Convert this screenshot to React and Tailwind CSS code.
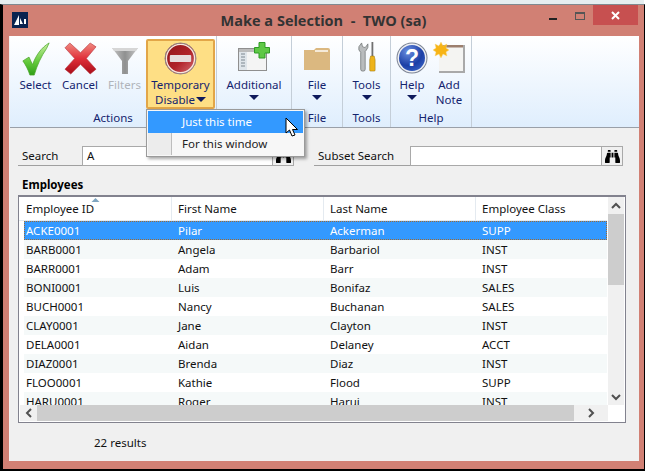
import React from "react";
import { FaBinoculars } from "react-icons/fa";

const rows = [
  ["ACKE0001", "Pilar", "Ackerman", "SUPP"],
  ["BARB0001", "Angela", "Barbariol", "INST"],
  ["BARR0001", "Adam", "Barr", "INST"],
  ["BONI0001", "Luis", "Bonifaz", "SALES"],
  ["BUCH0001", "Nancy", "Buchanan", "SALES"],
  ["CLAY0001", "Jane", "Clayton", "INST"],
  ["DELA0001", "Aidan", "Delaney", "ACCT"],
  ["DIAZ0001", "Brenda", "Diaz", "INST"],
  ["FLOO0001", "Kathie", "Flood", "SUPP"],
  ["HARU0001", "Roger", "Harui", "INST"],
];

const Caret = () => (
  <span className="inline-block w-0 h-0 border-x-[5px] border-x-transparent border-t-[5px] border-t-[#0f1a5c]" />
);

const Logo = () => (
  <svg width="16" height="16" viewBox="0 0 16 16">
    <rect width="16" height="16" fill="#0a2350" />
    <path d="M2 13 L7 3 L7 13 Z M8 6 L11 12 L8 12 Z M12 7 L14 7 L14 12 L12 12 Z" fill="#fff" />
  </svg>
);

const Check = () => (
  <svg width="28" height="34" viewBox="0 0 32 36" preserveAspectRatio="none">
    <defs>
      <linearGradient id="ck" x1="0" y1="0" x2="0" y2="1">
        <stop offset="0" stopColor="#c8f0a0" />
        <stop offset="0.6" stopColor="#62c93a" />
        <stop offset="1" stopColor="#2f9e18" />
      </linearGradient>
    </defs>
    <path d="M1 20 L8 16 L12 24 C16 14 22 6 31 1 L28 7 C22 15 17 25 14 35 L9 35 C7 29 4 24 1 20 Z" fill="url(#ck)" stroke="#4aa52a" strokeWidth="0.8" />
  </svg>
);

const Cross = () => (
  <svg width="33" height="33" viewBox="0 0 34 34">
    <defs>
      <linearGradient id="xr" x1="0" y1="0" x2="0" y2="1">
        <stop offset="0" stopColor="#f08a80" />
        <stop offset="0.5" stopColor="#e0303a" />
        <stop offset="1" stopColor="#a80c18" />
      </linearGradient>
    </defs>
    <path d="M6 1 L17 11 L27 1 L33 5 L23 17 L33 28 L27 33 L17 23 L7 33 L1 28 L11 17 L1 6 Z" fill="url(#xr)" stroke="#b3323a" strokeWidth="0.6" />
  </svg>
);

const Funnel = () => (
  <svg width="26" height="28" viewBox="0 0 26 28">
    <defs>
      <linearGradient id="fn" x1="0" y1="0" x2="1" y2="0">
        <stop offset="0" stopColor="#c4c4c4" />
        <stop offset="0.5" stopColor="#8f9090" />
        <stop offset="1" stopColor="#c8c8c8" />
      </linearGradient>
    </defs>
    <path d="M0 1 H26 L22 6 L16 14 V27 H10 V14 L4 6 Z" fill="url(#fn)" />
    <path d="M0 1 H26 L24 4 H2 Z" fill="#d6d6d6" />
  </svg>
);

const NoEntry = () => (
  <svg width="33" height="33" viewBox="0 0 34 34">
    <defs>
      <linearGradient id="ne" x1="0" y1="0" x2="1" y2="1">
        <stop offset="0" stopColor="#8e1418" />
        <stop offset="0.55" stopColor="#b02228" />
        <stop offset="1" stopColor="#d8757a" />
      </linearGradient>
    </defs>
    <circle cx="17" cy="17" r="16" fill="url(#ne)" stroke="#8a8a8a" strokeWidth="1" />
    <circle cx="17" cy="17" r="14.5" fill="none" stroke="#f4e8e0" strokeWidth="1.4" />
    <rect x="6" y="13.5" width="22" height="7" rx="1" fill="#e6dcdc" />
  </svg>
);

const Additional = () => (
  <svg width="32" height="29" viewBox="0 0 32 29">
    <rect x="0.5" y="6.5" width="28" height="22" fill="#f4f4f4" stroke="#8f8f8f" />
    <rect x="1" y="7" width="27" height="3" fill="#bcbcbc" />
    <rect x="1" y="10" width="8" height="18" fill="#dfe5ea" />
    <path d="M3 12 h4 M3 15 h4 M3 18 h4 M3 21 h4 M3 24 h4" stroke="#7d8790" strokeWidth="1" />
    <path d="M21 0.5 H27 V5.5 H31.5 V11 H27 V16 H21 V11 H16.5 V5.5 H21 Z" fill="#5fc846" stroke="#2f9a25" />
  </svg>
);

const Folder = () => (
  <svg width="26" height="23" viewBox="0 0 26 23">
    <path d="M0 3 H10 L12 1 H24 Q26 1 26 3 V23 H0 Z" fill="#dbb880" />
    <rect x="11" y="3" width="13" height="2" fill="#f5ead8" />
  </svg>
);

const ToolsIcon = () => (
  <svg width="18" height="30" viewBox="0 0 20 32" preserveAspectRatio="none">
    <path d="M1 5 L4 1 L5 5 L8 6 L11 2 Q12 6 9 9 L8 10 V29 Q8 31 6 31 H5 Q3 31 3 29 V11 Q0 9 1 5 Z" fill="#b9bcbd" stroke="#6f7273" strokeWidth="0.8" />
    <rect x="15" y="0" width="2" height="15" fill="#707070" />
    <path d="M14 15 H18 L19 19 V30 Q19 31 18 31 H14 Q13 31 13 30 V19 Z" fill="#eeb31a" stroke="#9e7a14" strokeWidth="0.6" />
  </svg>
);

const HelpIcon = () => (
  <svg width="32" height="32" viewBox="0 0 32 32">
    <defs>
      <radialGradient id="hp" cx="0.35" cy="0.25" r="0.9">
        <stop offset="0" stopColor="#6b8fe0" />
        <stop offset="0.6" stopColor="#1c3fa6" />
        <stop offset="1" stopColor="#3a66c8" />
      </radialGradient>
    </defs>
    <circle cx="16" cy="16" r="15.5" fill="#7c8494" />
    <circle cx="16" cy="16" r="14.5" fill="#eef0f4" />
    <circle cx="16" cy="16" r="13" fill="url(#hp)" />
    <text x="16" y="24" textAnchor="middle" fontFamily="'Liberation Sans', sans-serif" fontWeight="700" fontSize="23" fill="#fff">?</text>
  </svg>
);

const NoteIcon = () => (
  <svg width="33" height="32" viewBox="0 0 33 32">
    <path d="M6 3 H32 V31 H6 Z" fill="#f4f4f2" />
    <rect x="6" y="3" width="26" height="2.5" fill="#9c7f6e" />
    <path d="M32 3 V31 H6 V29 H30 V3 Z" fill="#a9a9a9" />
    <path d="M8 0 L10 4 L14 2 L13 6 L16 8 L13 10 L14 14 L10 12 L8 16 L6 12 L2 14 L3 10 L0 8 L3 6 L2 2 L6 4 Z" fill="#f7b416" stroke="#f9d67a" strokeWidth="0.4" />
  </svg>
);

const Cursor = () => (
  <svg width="14" height="21" viewBox="0 0 14 21">
    <path d="M1 1 V16 L4.5 13 L7 19 L10 18 L7.5 12.5 H12.5 Z" fill="#fff" stroke="#000" strokeWidth="1" />
  </svg>
);

function Chevron({ d }) {
  return (
    <svg width="10" height="8" viewBox="0 0 10 8">
      <path d={d} fill="none" stroke="#505050" strokeWidth="2" />
    </svg>
  );
}

function RibbonButton({ w, icon, l1, l2, caret, muted, iconClass }) {
  return (
    <div className={`${w} flex flex-col items-center shrink-0`}>
      <div className={`h-[36px] flex items-start justify-center ${iconClass || "pt-[3px]"}`}>{icon}</div>
      <div className={`mt-[2px] leading-[15px] text-center ${muted ? "text-[#b0b4ba]" : ""}`}>{l1}</div>
      {l2 && <div className="leading-[15px] text-center">{l2}</div>}
      {caret && <div className="h-[11px] flex items-center"><Caret /></div>}
    </div>
  );
}

function Group({ w, label, children }) {
  return (
    <div className={`${w} h-full flex flex-col border-r border-r-[#c4ced8] shrink-0`}>
      <div className="h-[74px] flex justify-center pt-[3px]">{children}</div>
      <div className="h-[17px] leading-[15px] text-center">{label}</div>
    </div>
  );
}

function SearchField({ label, lw, iw }) {
  return (
    <div className="flex items-stretch h-[20px]">
      <div className={`${lw} border-b border-b-[#a0a0a0] pl-1 leading-[20px] text-[#111]`}>{label}</div>
      <div className={`${iw} bg-white border border-[#a9a9a9] pl-1 leading-[17px] text-[#111]`}>{label === "Search" ? "A" : ""}</div>
      <div className="w-[21px] border border-l-0 border-[#a9a9a9] bg-[#f0f0f0] flex items-center justify-center">
        <FaBinoculars size={15} color="#000" />
      </div>
    </div>
  );
}

export default function App() {
  return (
    <div className="w-[647px] h-[473px] bg-white overflow-hidden relative text-[11.5px] text-[#111]" style={{ fontFamily: "'Noto Sans', sans-serif" }}>
      <div className="h-[4px] w-[644px] bg-[#e6eef0]" />
      <div className="w-[645px] h-[467px] bg-[#d18074] border-t border-t-[#808a90] border-l-[3px] border-l-black border-r border-r-black border-b-[2px] border-b-black flex flex-col">
        <div className="h-[31px] shrink-0 flex items-start relative px-[9px]">
          <div className="mt-[7px]"><Logo /></div>
          <div className="absolute left-0 right-0 top-[5px] text-center text-[14.5px] leading-[22px] font-bold text-[#333] whitespace-pre" style={{ fontFamily: "'Open Sans', sans-serif" }}>Make a Selection  -  TWO (sa)</div>
          <div className="absolute right-[6px] top-0 flex items-start">
            <div className="w-[8px] h-[2px] bg-[#222] mt-[13px] mr-[18px]" />
            <div className="w-[10px] h-[8px] border border-[#555] border-t-2 mt-[7px] mr-[8px]" />
            <div className="w-[45px] h-[20px] bg-[#c75050] text-white flex items-center justify-center">
              <svg width="9" height="9" viewBox="0 0 9 9"><path d="M1 1 L8 8 M8 1 L1 8" stroke="#fff" strokeWidth="2" /></svg>
            </div>
          </div>
        </div>

        <div className="ml-[6px] mr-[5px] h-[425px] shrink-0 bg-[#f0f0f0] border-l border-l-[#f4f4f4] flex flex-col">
          <div className="h-[92px] shrink-0 border-b border-b-[#9aa0a8] bg-gradient-to-b from-white to-[#dfeefd] flex text-[#14246e] pb-0">
            <Group w="w-[207px]" label="Actions">
              <div className="flex w-full pl-[4px] justify-start">
                <RibbonButton w="w-[43px]" icon={<Check />} l1="Select" />
                <RibbonButton w="w-[46px]" icon={<Cross />} l1="Cancel" />
                <RibbonButton w="w-[43px]" icon={<Funnel />} l1="Filters" muted iconClass="pt-[8px]" />
                <div className="w-[69px] h-[70px] bg-[#fedf85] border-2 border-[#e2a648] rounded-[2px] flex flex-col items-center shrink-0">
                  <div className="mt-[1px] h-[33px]"><NoEntry /></div>
                  <div className="mt-[2px] leading-[15px]">Temporary</div>
                  <div className="leading-[15px] flex items-center gap-[1px]">Disable<Caret /></div>
                </div>
              </div>
            </Group>
            <Group w="w-[75px]" label="">
              <RibbonButton w="w-[70px]" icon={<Additional />} l1="Additional" caret />
            </Group>
            <Group w="w-[51px]" label="File">
              <RibbonButton w="w-[40px]" icon={<Folder />} l1="File" caret iconClass="pt-[8px]" />
            </Group>
            <Group w="w-[48px]" label="Tools">
              <RibbonButton w="w-[40px]" icon={<ToolsIcon />} l1="Tools" caret />
            </Group>
            <Group w="w-[81px]" label="Help">
              <div className="flex w-full pl-[1px]">
                <RibbonButton w="w-[40px]" icon={<HelpIcon />} l1="Help" caret />
                <RibbonButton w="w-[34px]" icon={<NoteIcon />} l1="Add" l2="Note" />
              </div>
            </Group>
          </div>

          <div className="flex mt-[18px] ml-[8px] shrink-0">
            <SearchField label="Search" lw="w-[64px]" iw="w-[191px]" />
            <div className="ml-[20px]">
              <SearchField label="Subset Search" lw="w-[96px]" iw="w-[192px]" />
            </div>
          </div>

          <div className="ml-[12px] mt-[10px] h-[19px] font-bold leading-[18px] text-black">Employees</div>

          <div className="ml-[8px] w-[608px] h-[228px] shrink-0 border border-[#82828e] border-t-2 bg-white flex flex-col">
            <div className="flex h-[208px]">
              <div className="w-[589px] pr-[1px] flex flex-col overflow-hidden">
                <div className="h-[24px] shrink-0 flex pl-[5px] border-b border-b-[#e4eaf0] relative leading-[24px] text-[#111]">
                  {["Employee ID", "First Name", "Last Name", "Employee Class"].map((h, i) => (
                    <div key={h} className={`shrink-0 ${i === 0 ? "w-[148px] pl-[2px]" : "w-[152px] pl-[6px]"} ${i < 3 ? "border-r border-r-[#e4eaf0]" : ""}`}>{h}</div>
                  ))}
                  <svg className="absolute left-[72px] top-[1px]" width="9" height="4" viewBox="0 0 9 4"><path d="M0.5 4 L4.5 0 L8.5 4 Z" fill="#7fa5c0" /></svg>
                </div>
                <div className="flex-1 overflow-hidden pl-[5px]">
                  {rows.map((r, i) => (
                    <div key={r[0]} className={`h-[19px] flex leading-[19px] ${i === 0 ? "bg-[#3399ff] text-white outline-1 -outline-offset-1 outline-dotted outline-[#a06a30]" : i % 2 === 1 ? "bg-[#f5f9f9]" : "bg-white"}`}>
                      {r.map((c) => <div key={c} className="w-[152px] pl-[2px] shrink-0">{c}</div>)}
                    </div>
                  ))}
                </div>
              </div>
              <div className="w-[16px] bg-[#f0f0f0] flex flex-col items-center">
                <div className="h-[17px] w-full flex items-center justify-center"><Chevron d="M1 6 L5 2 L9 6" /></div>
                <div className="h-[71px] w-full bg-[#cdcdcd]" />
                <div className="flex-1" />
                <div className="h-[17px] w-full flex items-center justify-center"><Chevron d="M1 2 L5 6 L9 2" /></div>
              </div>
            </div>
            <div className="flex h-[16px] bg-[#f0f0f0] w-[588px] ml-[1px]">
              <div className="w-[17px] flex items-center justify-center"><svg width="8" height="10" viewBox="0 0 8 10"><path d="M6 1 L2 5 L6 9" fill="none" stroke="#505050" strokeWidth="2" /></svg></div>
              <div className="w-[537px] bg-[#cdcdcd]" />
              <div className="flex-1 flex items-center justify-center"><svg width="8" height="10" viewBox="0 0 8 10"><path d="M2 1 L6 5 L2 9" fill="none" stroke="#505050" strokeWidth="2" /></svg></div>
            </div>
          </div>

          <div className="ml-[84px] mt-[11px] leading-[18px] text-[#111]">22 results</div>
        </div>
      </div>

      <div className="absolute left-[146px] top-[109px] w-[159px] h-[48px] bg-[#f7f7f7] border border-[#9a9a9a] shadow-[2px_2px_3px_rgba(0,0,0,0.35)] p-[1px] flex flex-col text-[#222]">
        <div className="h-[23px] bg-[#3399ff] text-white pl-[34px] leading-[22px]">Just this time</div>
        <div className="flex h-[22px]">
          <div className="w-[24px] bg-[#ececec] border-r border-r-[#bdbdbd]" />
          <div className="pl-[10px] leading-[22px]">For this window</div>
        </div>
      </div>
      <div className="absolute left-[285px] top-[117px]"><Cursor /></div>
    </div>
  );
}
